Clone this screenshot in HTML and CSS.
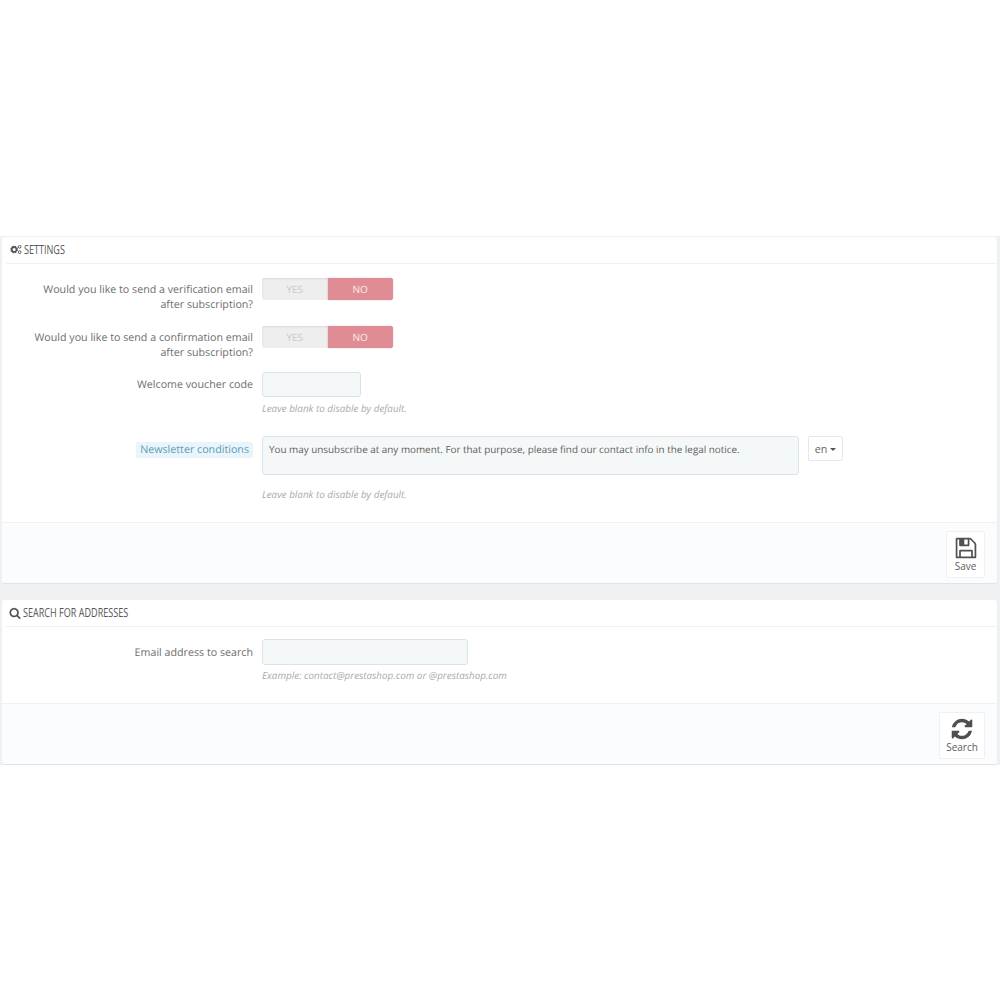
FILE: index.html
```html
<!DOCTYPE html>
<html lang="en">
<head>
    <meta charset="UTF-8">
    <title>Newsletter settings</title>
    <link rel="stylesheet" href="styles.css">
</head>
<body>
    <div class="page">
        <form class="panel">
            <h3 class="panel-heading">
                <svg class="heading-icon" viewBox="0 0 16 14">
                    <circle class="cog-teeth" cx="5.5" cy="7" r="4"/>
                    <circle class="cog" cx="5.5" cy="7" r="3.2"/>
                    <circle class="cog-small" cx="12.8" cy="3.4" r="1.8"/>
                    <circle class="cog-small" cx="12.8" cy="10.6" r="1.8"/>
                </svg>
                <span class="heading-text">Settings</span>
            </h3>
            <div class="form-body settings-body">
                <div class="row row-toggle">
                    <label class="row-label">Would you like to send a verification email after subscription?</label>
                    <div class="toggle"><span class="toggle-yes">YES</span><span class="toggle-no">NO</span></div>
                </div>
                <div class="row row-toggle row-toggle-last">
                    <label class="row-label">Would you like to send a confirmation email after subscription?</label>
                    <div class="toggle"><span class="toggle-yes">YES</span><span class="toggle-no">NO</span></div>
                </div>
                <div class="row row-voucher">
                    <label class="row-label label-input">Welcome voucher code</label>
                    <div>
                        <div class="input input-voucher"></div>
                        <p class="help help-voucher">Leave blank to disable by default.</p>
                    </div>
                </div>
                <div class="row">
                    <label class="row-label label-conditions"><span class="hint">Newsletter conditions</span></label>
                    <div>
                        <div class="lang-line">
                            <div class="input textarea">You may unsubscribe at any moment. For that purpose, please find our contact info in the legal notice.</div>
                            <button type="button" class="lang-btn">en <span class="caret"></span></button>
                        </div>
                        <p class="help help-conditions">Leave blank to disable by default.</p>
                    </div>
                </div>
            </div>
            <div class="panel-footer">
                <button type="button" class="process-btn btn-save">
                    <svg class="process-icon" viewBox="0 0 1792 1792"><path d="M512 1536h768v-384h-768v384zm896 0h128v-896q0-14-10-38.5t-20-34.5l-281-281q-10-10-34-20t-39-10v416q0 40-28 68t-68 28h-576q-40 0-68-28t-28-68v-416h-128v1280h128v-416q0-40 28-68t68-28h832q40 0 68 28t28 68v416zm-384-928v-320q0-13-9.5-22.5t-22.5-9.5h-192q-13 0-22.5 9.5t-9.5 22.5v320q0 13 9.5 22.5t22.5 9.5h192q13 0 22.5-9.5t9.5-22.5zm640 32v928q0 40-28 68t-68 28h-1344q-40 0-68-28t-28-68v-1344q0-40 28-68t68-28h928q40 0 88 20t76 48l280 280q28 28 48 76t20 88z"/></svg>
                    Save
                </button>
            </div>
        </form>

        <form class="panel panel-search">
            <h3 class="panel-heading">
                <svg class="heading-icon icon-search" viewBox="0 0 1792 1792"><path d="M1216 832q0-185-131.5-316.5t-316.5-131.5-316.5 131.5-131.5 316.5 131.5 316.5 316.5 131.5 316.5-131.5 131.5-316.5zm512 832q0 52-38 90t-90 38q-54 0-90-38l-343-342q-179 124-399 124-143 0-273.5-55.5t-225-150-150-225-55.5-273.5 55.5-273.5 150-225 225-150 273.5-55.5 273.5 55.5 225 150 150 225 55.5 273.5q0 220-124 399l343 343q37 37 37 90z"/></svg>
                <span class="heading-text">Search for addresses</span>
            </h3>
            <div class="form-body search-body">
                <div class="row">
                    <label class="row-label label-email">Email address to search</label>
                    <div>
                        <div class="input input-email"></div>
                        <p class="help">Example: contact@prestashop.com or @prestashop.com</p>
                    </div>
                </div>
            </div>
            <div class="panel-footer">
                <button type="button" class="process-btn btn-search">
                    <svg class="process-icon" viewBox="0 0 1792 1792"><path d="M1639 1056q0 5-1 7-64 268-268 434.5t-478 166.5q-146 0-282.5-55t-243.5-157l-129 129q-19 19-45 19t-45-19-19-45v-448q0-26 19-45t45-19h448q26 0 45 19t19 45-19 45l-137 137q71 66 161 102t187 36q134 0 250-65t186-179q11-17 53-117 8-23 30-23h192q13 0 22.5 9.5t9.5 22.5zm25-800v448q0 26-19 45t-45 19h-448q-26 0-45-19t-19-45 19-45l138-138q-148-137-349-137-134 0-250 65t-186 179q-11 17-53 117-8 23-30 23h-199q-13 0-22.5-9.5t-9.5-22.5v-7q65-268 270-434.5t480-166.5q146 0 284 55.5t245 156.5l130-129q19-19 45-19t45 19 19 45z"/></svg>
                    Search
                </button>
            </div>
        </form>
    </div>
</body>
</html>
```

FILE: styles.css
```css
body {
    margin: 0;
    background-color: white;
    font-family: "Open Sans", sans-serif;
    font-size: 10.7px;
    text-rendering: geometricPrecision;
    color: #6e6e6e;
}

.page {
    margin-top: 236px;
    padding: 1px 3px 1px 2px;
    background-color: #eff1f2;
}

.panel {
    display: block;
    background-color: white;
    border-radius: 3px;
    box-shadow: 0 1px 1px #dfe2e4;
    overflow: hidden;
}

.panel-search {
    margin-top: 17px;
}

.panel-heading {
    display: flex;
    align-items: center;
    gap: 2px;
    height: 25px;
    margin: 0 0 0 4px;
    padding: 0 0 1px 4px;
    border-bottom: 1px solid #f0f1f2;
    font-size: 12.5px;
    font-weight: normal;
    text-transform: uppercase;
    color: #555;
}

.heading-text {
    transform: scaleX(0.725);
    transform-origin: left center;
}

.heading-icon {
    width: 12px;
    height: 11px;
    fill: #555;
}

.icon-search {
    height: 12px;
    margin-left: -1px;
}

.cog {
    fill: none;
    stroke: #555;
    stroke-width: 2.2;
}

.cog-teeth {
    fill: none;
    stroke: #555;
    stroke-width: 2;
    stroke-dasharray: 2 1.15;
}

.cog-small {
    fill: none;
    stroke: #555;
    stroke-width: 1.3;
}

.form-body {
    padding-left: 6px;
}

.settings-body {
    height: 258px;
    padding-top: 14px;
    box-sizing: border-box;
}

.search-body {
    height: 76px;
    padding-top: 12px;
    box-sizing: border-box;
}

.row {
    display: flex;
    gap: 9px;
}

.row-toggle {
    height: 48px;
}

.row-toggle-last {
    height: 46px;
}

.row-voucher {
    height: 64px;
}

.row-label {
    box-sizing: border-box;
    width: 245px;
    flex: none;
    padding: 5px 0 0 20px;
    text-align: right;
    line-height: 15px;
}

.label-input {
    padding-top: 6px;
}

.label-conditions {
    padding-top: 7px;
}

.label-email {
    padding-top: 7px;
}

.hint {
    padding: 1px 4px;
    background-color: #e9f5fa;
    color: #5c9db8;
    border-radius: 2px;
}

.toggle {
    display: flex;
    width: 131px;
    height: 22px;
    font-size: 10px;
    line-height: 22px;
    text-align: center;
}

.toggle-yes {
    flex: 1;
    background-color: #eeeeee;
    border-radius: 3px 0 0 3px;
    box-shadow: inset 0 1px 2px #d8d8d8;
    color: #c9c9c9;
}

.toggle-no {
    flex: 1;
    background-color: #e08c94;
    border-radius: 0 3px 3px 0;
    box-shadow: 0 0 1px #b86a72;
    color: #fbeaec;
}

.input {
    box-sizing: border-box;
    background-color: #f5f8f9;
    border: 1px solid #d9e4e8;
    border-radius: 3px;
}

.input-voucher {
    width: 99px;
    height: 25px;
}

.input-email {
    width: 206px;
    height: 26px;
}

.textarea {
    width: 537px;
    height: 39px;
    padding: 5px 6px;
    font-size: 9.9px;
    line-height: 15px;
    color: #5f5f5f;
}

.lang-line {
    display: flex;
    align-items: flex-start;
    gap: 9px;
}

.lang-btn {
    width: 35px;
    height: 25px;
    padding: 0;
    background-color: white;
    border: 1px solid #e6e8e9;
    border-radius: 2px;
    font-family: "Open Sans", sans-serif;
    font-size: 10.7px;
    color: #666;
}

.caret {
    display: inline-block;
    vertical-align: middle;
    border-top: 3px solid #555;
    border-left: 3px solid transparent;
    border-right: 3px solid transparent;
}

.help {
    margin: 3px 0 0 0;
    font-size: 9.85px;
    font-style: italic;
    line-height: 14px;
    color: #aaaaaa;
}

.help-voucher {
    margin-top: 4px;
}

.help-conditions {
    margin-top: 12px;
}

.panel-footer {
    display: flex;
    justify-content: flex-end;
    padding: 8px 12px 5px 0;
    background-color: #fbfcfe;
    border-top: 1px solid #eff1f2;
}

.process-btn {
    display: flex;
    flex-direction: column;
    align-items: center;
    height: 47px;
    padding: 3px 0 0 0;
    background-color: white;
    border: 1px solid #eef0f2;
    border-radius: 2px;
    font-family: "Open Sans", sans-serif;
    font-size: 10px;
    line-height: 14px;
    color: #5c5c5c;
}

.btn-save {
    width: 39px;
}

.btn-search {
    width: 46px;
}

.process-icon {
    width: 24px;
    height: 24px;
    margin: 1px 0 -1px 0;
    fill: #505050;
}
```
